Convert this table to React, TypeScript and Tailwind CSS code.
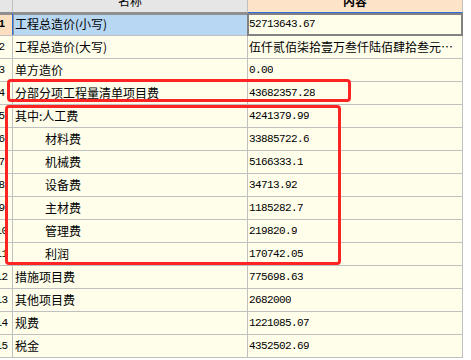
import React from 'react';

type Row = { no: number; name: string; value: string; indent?: boolean; cjkValue?: boolean };

const ROWS: Row[] = [
  { no: 1, name: '工程总造价(小写)', value: '52713643.67' },
  { no: 2, name: '工程总造价(大写)', value: '伍仟贰佰柒拾壹万叁仟陆佰肆拾叁元陆角柒分', cjkValue: true },
  { no: 3, name: '单方造价', value: '0.00' },
  { no: 4, name: '分部分项工程量清单项目费', value: '43682357.28' },
  { no: 5, name: '其中:人工费', value: '4241379.99' },
  { no: 6, name: '材料费', value: '33885722.6', indent: true },
  { no: 7, name: '机械费', value: '5166333.1', indent: true },
  { no: 8, name: '设备费', value: '34713.92', indent: true },
  { no: 9, name: '主材费', value: '1185282.7', indent: true },
  { no: 10, name: '管理费', value: '219820.9', indent: true },
  { no: 11, name: '利润', value: '170742.05', indent: true },
  { no: 12, name: '措施项目费', value: '775698.63' },
  { no: 13, name: '其他项目费', value: '2682000' },
  { no: 14, name: '规费', value: '1221085.07' },
  { no: 15, name: '税金', value: '4352502.69' },
];

const GridRow: React.FC<{ row: Row }> = ({ row }) => {
  const first = row.no === 1;
  return (
    <div className="relative flex h-[23px] border-b border-[#c0c0c0]">
      {/* row number, column is scrolled so only its right part shows */}
      <div
        className={
          first
            ? 'w-[13px] shrink-0 overflow-hidden flex items-center border-r border-[#2a6fe0] bg-[#fbdfbf] shadow-[inset_0_2px_0_#8f8f8f]'
            : 'w-[13px] shrink-0 overflow-hidden flex items-center border-r border-[#c0c0c0] bg-[#fffeeb]'
        }
      >
        <span
          className={
            first
              ? "w-[21px] -ml-[9px] shrink-0 text-center font-['Liberation_Mono',monospace] text-[11px] tracking-[-0.6px] font-bold text-black"
              : "w-[21px] -ml-[9px] shrink-0 text-center font-['Liberation_Mono',monospace] text-[11px] tracking-[-0.6px] text-black"
          }
        >
          {row.no}
        </span>
      </div>

      {/* name */}
      <div
        className={
          first
            ? "w-[235px] shrink-0 flex items-center border-r border-[#c0c0c0] bg-[#b8d7f3] shadow-[inset_1px_2px_0_#8f8f8f] pl-[2px] font-['Noto_Sans_CJK_SC',sans-serif] text-[12px] text-black whitespace-nowrap"
            : row.indent
            ? "w-[235px] shrink-0 flex items-center border-r border-[#c0c0c0] bg-[#fffeeb] pl-[32px] font-['Noto_Sans_CJK_SC',sans-serif] text-[12px] text-black whitespace-nowrap"
            : "w-[235px] shrink-0 flex items-center border-r border-[#c0c0c0] bg-[#fffeeb] pl-[2px] font-['Noto_Sans_CJK_SC',sans-serif] text-[12px] text-black whitespace-nowrap"
        }
      >
        {row.name}
      </div>

      {/* value */}
      <div className="w-[215px] shrink-0 flex items-center border-r border-[#c0c0c0] bg-[#fffeeb] pl-[1px] overflow-hidden">
        <span
          className={
            row.cjkValue
              ? "block min-w-0 overflow-hidden text-ellipsis whitespace-nowrap font-['Noto_Sans_CJK_SC',sans-serif] text-[12px] text-black"
              : "block min-w-0 overflow-hidden whitespace-nowrap font-['Liberation_Mono',monospace] text-[11px] tracking-[-0.6px] text-black"
          }
        >
          {row.value}
        </span>
      </div>

      {/* current cell frame */}
      {first && (
        <div className="absolute left-[247px] top-0 w-[216px] h-[23px] border-2 border-[#828282] pointer-events-none" />
      )}
    </div>
  );
};

export default function App() {
  return (
    <div className="relative w-[471px] h-[360px] overflow-hidden bg-white">
      <div className="w-[463px] -mt-[10px]">
        {/* header, scrolled partly out of view */}
        <div className="flex h-[23px]">
          <div className="w-[13px] shrink-0 bg-[#e6e6e6] border-r border-b border-[#c0c0c0] border-b-[#8f8f8f]" />
          <div className="w-[235px] shrink-0 flex items-center justify-center bg-[#e6e6e6] border-r border-b border-[#c0c0c0] border-b-[#8f8f8f] font-['Noto_Sans_CJK_SC',sans-serif] text-[12px] text-black">
            名称
          </div>
          <div className="w-[215px] shrink-0 flex items-center justify-center bg-[#fde4c9] border-r border-b border-[#c0c0c0] border-b-[#2a6fe0] font-['Noto_Sans_CJK_SC',sans-serif] text-[12px] font-bold text-black">
            内容
          </div>
        </div>

        {ROWS.map((r) => (
          <GridRow key={r.no} row={r} />
        ))}
      </div>

      {/* red annotation frames */}
      <div className="absolute left-[7px] top-[79px] w-[344px] h-[23px] border-[3px] border-[#ff2424] rounded-[4px] pointer-events-none" />
      <div className="absolute left-[5px] top-[105px] w-[336px] h-[160px] border-[3px] border-[#ff2424] rounded-[4px] pointer-events-none" />
    </div>
  );
}
